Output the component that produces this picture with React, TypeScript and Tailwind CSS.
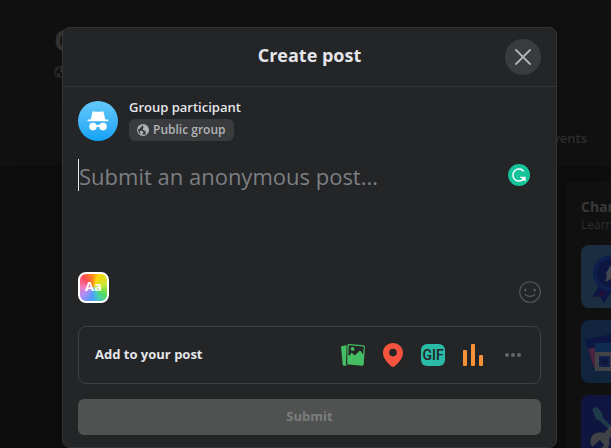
import type { ReactNode } from 'react'

interface ToolButtonProps {
  label: string
  children: ReactNode
}

function GlobeIcon({ className }: { className: string }) {
  return (
    <svg viewBox="0 0 12 12" className={className} aria-hidden="true">
      <circle cx="6" cy="6" r="5.400" fill="none" stroke="currentColor" strokeWidth="1.100" />
      <path d="M1 4.800 2.200 2.200 4.500.9l.7.900-1 1.300-1 .5-.5 1.500Z" fill="currentColor" />
      <path d="M2.800 7l1.800-.2 1.500.9.3 1.200-1 .9-.3 1.500-1.300-.5-.5-1.700Z" fill="currentColor" />
      <path d="M6.200.6 9.700 1.800l1.900 3.200v2.600L9.700 10l-1.300-1.500.2-1.400-1.700-.6-1.200-1.300.9-1.700-.6-1.200Z" fill="currentColor" />
    </svg>
  )
}

function IncognitoIcon() {
  return (
    <svg viewBox="0 0 22 20" className="w-[22px] h-5" fill="#fff" aria-hidden="true">
      <path d="M5.400 1.300C5.600.5 6.300.2 7.100.4c2.600.6 5.200.6 7.800 0 .8-.2 1.500.1 1.700.9L18.300 8.500h2.500c.9 0 .9 1.700 0 1.700H1.200c-.9 0-.9-1.700 0-1.700h2.500Z" />
      <circle cx="6" cy="15.600" r="3.800" />
      <circle cx="16" cy="15.600" r="3.800" />
      <path d="M8 14.600c2-1 4-1 6 0v1.900c-2-.9-4-.9-6 0Z" />
    </svg>
  )
}

function PhotoIcon() {
  return (
    <svg viewBox="0 0 24 24" className="size-6" fill="#45bd62" aria-hidden="true">
      <path d="M.2 3.200 4.800 2.200c.5-.1.8.1.8.600l-.6 17.900.8 1.800-2.400.3c-1 .1-1.600-.4-1.700-1.300L.1 4.500Z" />
      <path
        fillRule="evenodd"
        d="M8.100 1 22.300 2.200c1.100.1 1.700.8 1.600 1.800l-1.200 17.300c-.1 1-.8 1.600-1.800 1.500L7.700 21.600c-1-.1-1.600-.7-1.500-1.700L6.400 2.500C6.500 1.500 7.100.9 8.100 1Zm.3 1.300c-.4 0-.6.1-.6.500L7.400 12.500l1.800-.6 1.500-2.400 2.700 2.700 1.800-.9 3.200-3.600 1.500.5 2.200 3.200.7-7.200c0-.4-.1-.6-.5-.6Z"
      />
      <circle cx="11.600" cy="5.900" r="1.900" />
    </svg>
  )
}

function PinIcon() {
  return (
    <svg viewBox="0 0 20 24" className="w-5 h-6" aria-hidden="true">
      <path fill="#f5533d" fillRule="evenodd" d="M10 0c5.600 0 10 4.300 10 9.800 0 5.700-4.400 10-8.400 13.500-1 .9-2.200.9-3.200 0C4.400 19.800 0 15.500 0 9.800 0 4.300 4.400 0 10 0Zm0 5.800a3.800 3.800 0 1 0 0 7.600 3.800 3.800 0 0 0 0-7.600Z" />
    </svg>
  )
}

function SmileIcon() {
  return (
    <svg viewBox="0 0 22 22" className="size-[22px]" fill="none" stroke="#55585c" strokeWidth="1.100" strokeLinecap="round" aria-hidden="true">
      <circle cx="11" cy="11" r="10.300" />
      <path d="M6.500 13.600c1.900 2.300 7.100 2.300 9 0" strokeWidth="1.400" />
      <ellipse cx="6.300" cy="9" rx=".7" ry="1" fill="#55585c" />
      <ellipse cx="15.700" cy="9" rx=".7" ry="1" fill="#55585c" />
    </svg>
  )
}

function AssistantIcon() {
  return (
    <svg viewBox="0 0 22 22" className="size-[22px]" aria-hidden="true">
      <circle cx="11" cy="11" r="11" fill="#15c39a" />
      <path d="M15.300 7A6 6 0 1 0 14.500 15.900" fill="none" stroke="#fff" strokeWidth="1.500" strokeLinecap="round" />
      <path d="M12 12.700h5.600v5.100l-1.800-1.500-1.500.6-.8-1.100 1-1.200-2-.5Z" fill="#fff" />
    </svg>
  )
}

function ToolButton({ label, children }: ToolButtonProps) {
  return (
    <button type="button" aria-label={label} className="flex size-10 items-center justify-center rounded-full">
      {children}
    </button>
  )
}

function BadgeArt() {
  return (
    <svg viewBox="0 0 63 63" className="size-[63px] shrink-0 rounded-lg bg-[#1c2f42]" aria-hidden="true">
      <path d="m19 40-8 12 8-1 4 7 9-14 8 12 8-9-5-8Z" fill="#0e1644" />
      <path d="m20 46-3 6 4 0 3-5Z" fill="#290f35" />
      <circle cx="30" cy="28" r="18" fill="#10204e" />
      <circle cx="30" cy="28" r="14" fill="#0d1741" />
      <path d="m30 20 3 6 6 1-5 4 1 7-5-4-6 3 2-6-1-3Z" fill="#44474d" />
    </svg>
  )
}

function ShopArt() {
  return (
    <svg viewBox="0 0 63 63" className="size-[63px] shrink-0 rounded-lg bg-[#11253f]" aria-hidden="true">
      <path d="m4 20 34-8 8 24-34 10Z" fill="#0d1746" />
      <path d="m7 29 8-2 5 20-7 1Z" fill="#4d2440" />
      <path d="M14 23h49v10H14Z" fill="#102b50" />
      <path d="M14 32h49v19H14Z" fill="#424448" />
      <path d="M19 37h9v9h-9Z" fill="#10183f" stroke="#14224d" strokeWidth="2" />
    </svg>
  )
}

function WrenchArt() {
  return (
    <svg viewBox="0 0 63 63" className="size-[63px] shrink-0 rounded-lg bg-[#0f1740]" aria-hidden="true">
      <path d="m11 14 5-2 5 6 1 5 18 17-3 3-18-17-4-2Z" fill="#203b49" />
      <path d="M11 52c-5-9 3-17 12-14l7-7 6 5-8 8c2 8-3 13-10 12l5-6-4-5Z" fill="#404247" />
    </svg>
  )
}

function GroupPage() {
  return (
    <div className="flex min-h-[448px] flex-col overflow-hidden bg-[#0d0d0d]" aria-hidden="true">
      <header className="flex h-[166px] flex-col justify-between bg-[#111111] pt-[22px] pr-6 pb-4 pl-[54px]">
        <div>
          <h1 className="text-[28px] leading-9 font-bold text-[#333334]">Group</h1>
          <p className="flex items-center pt-2 text-[#303031]">
            <GlobeIcon className="size-3" />
          </p>
        </div>
        <p className="text-right text-[13px] leading-6 font-semibold text-[#303031]">Events</p>
      </header>
      <div className="flex justify-end pt-4">
        <aside className="flex w-[46px] flex-col overflow-hidden rounded-tl-lg bg-[#111111] py-4 pl-4">
          <h2 className="text-sm leading-[18px] font-bold text-[#38393a]">Chan</h2>
          <p className="text-xs leading-[18px] text-[#2d2e2f]">Learn</p>
          <div className="flex flex-col gap-3 pt-[11px]">
            <BadgeArt />
            <ShopArt />
            <WrenchArt />
          </div>
        </aside>
      </div>
    </div>
  )
}

export default function App() {
  return (
    <div className="relative h-screen overflow-hidden font-['Open_Sans','Noto_Sans',sans-serif]">
      <GroupPage />

      <div className="absolute inset-0 pt-[27px] pr-[54px] pl-[62px]">
        <div role="dialog" aria-labelledby="dialog-title" className="rounded-lg border border-[#333436] bg-[#242526] shadow-2xl">
          <header className="grid h-[59px] grid-cols-[1fr_auto_1fr] items-center border-b border-[#343537] px-[15px]">
            <h2 id="dialog-title" className="col-start-2 pb-1 text-lg leading-6 font-bold text-[#e4e6eb]">Create post</h2>
            <button type="button" aria-label="Close" className="flex size-9 items-center justify-center justify-self-end rounded-full bg-[#3a3b3c]">
              <svg viewBox="0 0 16 16" className="size-4" fill="none" stroke="#b0b3b8" strokeWidth="1.800" strokeLinecap="round" aria-hidden="true">
                <path d="m1 1 14 14M15 1 1 15" />
              </svg>
            </button>
          </header>

          <form className="px-[15px] pb-3" onSubmit={(e) => e.preventDefault()}>
            <div className="flex items-end gap-[11px] pt-[11px]">
              <div className="flex size-10 shrink-0 items-center justify-center rounded-full bg-linear-to-b from-[#63c9fb] to-[#0aa2f5]">
                <IncognitoIcon />
              </div>
              <div className="flex flex-col items-start gap-[3px]">
                <p className="text-[13px] leading-[18px] font-semibold text-[#e4e6eb]">Group participant</p>
                <p className="flex h-[22px] items-center gap-1 rounded-md bg-[#3a3b3c] px-2 text-xs leading-[18px] font-semibold text-[#b0b3b8]">
                  <GlobeIcon className="size-3" />
                  Public group
                </p>
              </div>
            </div>

            <div className="flex items-start justify-between pt-[18px] pr-[11px]">
              <div className="flex min-w-0 flex-1 items-start">
                <span className="h-8 w-px bg-[#e4e6eb]" />
                <textarea
                  aria-label="Submit an anonymous post"
                  placeholder="Submit an anonymous post..."
                  rows={3}
                  className="h-28 min-w-0 flex-1 resize-none bg-transparent text-[22px] leading-[34px] text-[#e4e6eb] placeholder:text-[#7c7f83] focus:outline-none"
                />
              </div>
              <button type="button" aria-label="Writing assistant" className="pt-[5px]">
                <AssistantIcon />
              </button>
            </div>

            <div className="flex items-center justify-between">
              <button
                type="button"
                aria-label="Show background options"
                className="flex size-[31px] items-center justify-center rounded-lg border-2 border-white bg-[conic-gradient(from_20deg,#ffd500,#c6e93c_16%,#52dc58_28%,#45c8c0_38%,#4d9cff_47%,#b08cf5_60%,#f57ac0_70%,#ff4b55_82%,#ff8a1c_93%,#ffd500)] text-[13px] font-bold text-white"
              >
                Aa
              </button>
              <button type="button" aria-label="Emoji" className="pt-2.5">
                <SmileIcon />
              </button>
            </div>

            <div className="mt-[23px] flex h-[58px] items-center justify-between rounded-lg border border-[#3e4042] pr-[7px] pl-4">
              <p className="pb-0.5 text-[13px] leading-[18px] font-bold text-[#e4e6eb]">Add to your post</p>
              <div className="flex">
                <ToolButton label="Photo/video"><PhotoIcon /></ToolButton>
                <ToolButton label="Check in"><PinIcon /></ToolButton>
                <ToolButton label="GIF">
                  <span className="flex h-[22px] w-6 items-center justify-center rounded-md bg-[#2abba7] font-['Roboto',sans-serif] text-sm leading-none font-medium text-[#242526]">GIF</span>
                </ToolButton>
                <ToolButton label="Poll">
                  <svg viewBox="0 0 20 22" className="h-[22px] w-5" fill="#f7923b" aria-hidden="true">
                    <rect y="6" width="4" height="16" rx="1" />
                    <rect x="8" width="4" height="22" rx="1" />
                    <rect x="16" y="11" width="4" height="11" rx="1" />
                  </svg>
                </ToolButton>
                <ToolButton label="More">
                  <svg viewBox="0 0 16 4" className="h-1 w-4" fill="#606770" aria-hidden="true">
                    <circle cx="2" cy="2" r="2" />
                    <circle cx="8" cy="2" r="2" />
                    <circle cx="14" cy="2" r="2" />
                  </svg>
                </ToolButton>
              </div>
            </div>

            <button type="submit" disabled className="mt-[15px] h-9 w-full rounded-md bg-[#505151] text-[13px] font-bold text-[#7b7d7f]">
              Submit
            </button>
          </form>
        </div>
      </div>
    </div>
  )
}
